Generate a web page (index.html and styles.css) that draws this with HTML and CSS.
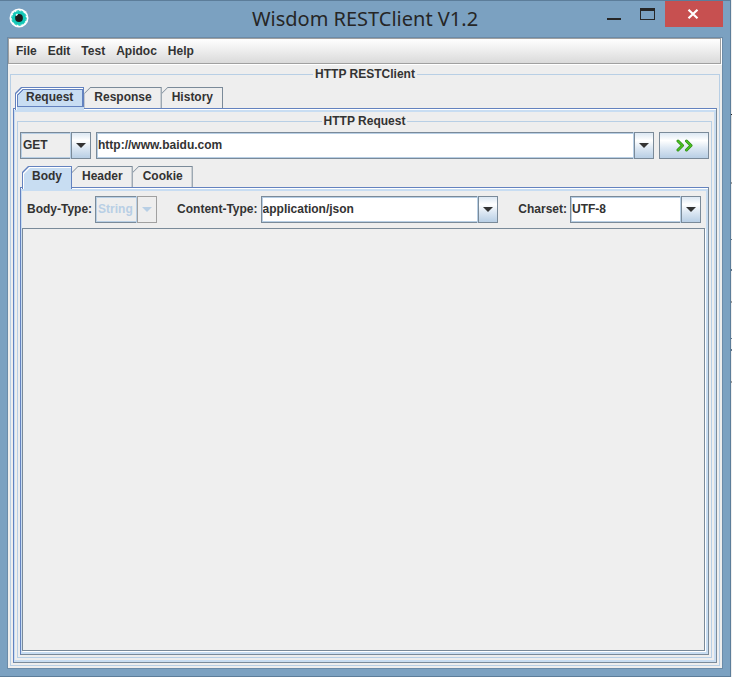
FILE: index.html
```html
<!DOCTYPE html>
<html lang="en">
<head>
    <meta charset="UTF-8">
    <meta name="viewport" content="width=device-width, initial-scale=1.0">
    <title>Wisdom RESTClient V1.2</title>
    <link rel="stylesheet" href="styles.css">
</head>
<body>
    <div class="window">
        <header class="titlebar">
            <svg class="app-icon" viewBox="0 0 20 20" width="20" height="20">
                <circle cx="10" cy="10" r="9.5" fill="#fff"/>
                <circle cx="10" cy="10" r="5.800" fill="#14c8b8" stroke="#14c8b8" stroke-width="2.600"/>
                <circle cx="10" cy="10" r="7.300" fill="none" stroke="#14c8b8" stroke-width="1" stroke-dasharray="3 1.500"/>
                <circle cx="10" cy="10" r="3.9" fill="#1c1c1c"/>
                <path d="M7 7.500l1.500-1.500" stroke="#fff" stroke-width="1.500"/>
            </svg>
            <h1 class="title">Wisdom RESTClient V1.2</h1>
            <div class="window-buttons">
                <button type="button" class="win-btn" aria-label="Minimize">
                    <svg viewBox="0 0 15 12" width="15" height="12"><path d="M0 10h14v2H0z" fill="#262626"/></svg>
                </button>
                <button type="button" class="win-btn" aria-label="Maximize">
                    <svg viewBox="0 0 15 12" width="15" height="12"><path d="M0 0h15v12H0zM1 3v8h13V3z" fill="#262626" fill-rule="evenodd"/></svg>
                </button>
                <button type="button" class="win-btn close" aria-label="Close">
                    <svg viewBox="0 0 12 10" width="12" height="10"><path d="M1.500 .8l9 8.400M10.500 .8l-9 8.400" stroke="#fff" stroke-width="2.200"/></svg>
                </button>
            </div>
        </header>

        <div class="frame">
            <nav class="menubar">
                <button type="button">File</button>
                <button type="button">Edit</button>
                <button type="button">Test</button>
                <button type="button">Apidoc</button>
                <button type="button">Help</button>
            </nav>

            <main class="content">
                <fieldset class="group">
                    <legend>HTTP RESTClient</legend>
                    <div class="tabs" role="tablist">
                        <button type="button" class="tab selected focused" role="tab" aria-selected="true">Request</button>
                        <button type="button" class="tab" role="tab" aria-selected="false">Response</button>
                        <button type="button" class="tab" role="tab" aria-selected="false">History</button>
                    </div>

                    <div class="pane pane-request" role="tabpanel">
                        <fieldset class="group group-request">
                            <legend>HTTP Request</legend>
                            <div class="url-row">
                                <div class="combo method">
                                    <select aria-label="Method">
                                        <option>GET</option>
                                        <option>POST</option>
                                        <option>PUT</option>
                                        <option>DELETE</option>
                                    </select>
                                    <span class="arrow"></span>
                                </div>
                                <div class="combo editable grow">
                                    <input type="text" value="http://www.baidu.com" aria-label="URL">
                                    <button type="button" class="arrow" aria-label="Show history"></button>
                                </div>
                                <button type="button" class="send" aria-label="Send">
                                    <svg viewBox="0 0 17 14" width="17" height="14" fill="none" stroke-linecap="round" stroke-linejoin="round">
                                        <path d="M2 2l4.500 4.500L2 11M10.500 2l4.500 4.500L10.500 11" stroke="#2f8a1a" stroke-width="3"/>
                                        <path d="M2 2l4.500 4.500L2 11M10.500 2l4.500 4.500L10.500 11" stroke="#4cc41f" stroke-width="1.600"/>
                                    </svg>
                                </button>
                            </div>

                            <div class="tabs" role="tablist">
                                <button type="button" class="tab selected" role="tab" aria-selected="true">Body</button>
                                <button type="button" class="tab" role="tab" aria-selected="false">Header</button>
                                <button type="button" class="tab" role="tab" aria-selected="false">Cookie</button>
                            </div>
                            <div class="pane pane-body" role="tabpanel">
                                <div class="body-row">
                                    <label for="bodyType">Body-Type:</label>
                                    <div class="combo body-type disabled">
                                        <select id="bodyType" disabled>
                                            <option>String</option>
                                            <option>File</option>
                                        </select>
                                        <span class="arrow"></span>
                                    </div>
                                    <label for="contentType">Content-Type:</label>
                                    <div class="combo editable grow">
                                        <select id="contentType">
                                            <option>application/json</option>
                                            <option>application/xml</option>
                                            <option>text/plain</option>
                                        </select>
                                        <span class="arrow"></span>
                                    </div>
                                    <label for="charset">Charset:</label>
                                    <div class="combo editable charset">
                                        <select id="charset">
                                            <option>UTF-8</option>
                                            <option>UTF-16</option>
                                        </select>
                                        <span class="arrow"></span>
                                    </div>
                                </div>
                                <textarea class="body-text" aria-label="Body"></textarea>
                            </div>
                        </fieldset>
                    </div>
                </fieldset>
            </main>
        </div>
    </div>
</body>
</html>
```
FILE: styles.css
```css
:root {
    --panel: #eeeeee;
    --text: #333333;
    --line: #7a8a99;
    --line-light: #b8cfe5;
    --line-blue: #6382bf;
    --fill-blue: #c8ddf2;
    --chrome: #7ba1c1;
    --chrome-dark: #5c7d9a;
    --button-fill: linear-gradient(#dde8f3, #fff 30%, #dde8f3 60%, #b8cfe5);
}

* {
    margin: 0;
    padding: 0;
    box-sizing: border-box;
}

body {
    height: 100vh;
    background: linear-gradient(#eee 114px, #222 114px, #222 115px, #ddd 115px, #eee 182px, #999 182px, #999 184px, #eee 184px, #eee 239px, #678 239px, #678 240px, #eee 240px, #eee 269px, #678 269px, #678 271px, #eee 271px, #eee 301px, #999 301px, #999 303px, #eee 303px, #eee 338px, #678 338px, #678 339px, #eee 339px, #eee 349px, #678 349px, #678 351px, #eee 351px, #eee 381px, #999 381px, #999 383px, #eee 383px);
    color: var(--text);
    font: bold 12px/15px "Liberation Sans", Arial, sans-serif;
    overflow: hidden;
}

button,
input,
select,
textarea {
    font: inherit;
    color: inherit;
    border: 0;
    border-radius: 0;
    background: none;
    appearance: none;
    outline: none;
}

.window {
    display: flex;
    flex-direction: column;
    height: 100%;
    margin-right: 1px;
    padding: 0 7px 7px;
    background: var(--chrome);
    border: 1px solid var(--chrome-dark);
    border-left: 0;
}

/* Title bar */
.titlebar {
    display: grid;
    grid-template-columns: 1fr auto 1fr;
    height: 36px;
}

.app-icon {
    margin: 7px 2px;
}

.title {
    font: 20px/36px "Noto Sans", "Open Sans", sans-serif;
    color: #262626;
}

.window-buttons {
    display: flex;
    justify-content: flex-end;
    align-items: flex-start;
}

.win-btn {
    display: flex;
    width: 33px;
    height: 26px;
    padding: 7px 2px 0 0;
    justify-content: center;
}

.win-btn.close {
    width: 58px;
    padding-top: 8px;
    background: #c75050;
}

/* Frame */
.frame {
    flex: 1;
    display: flex;
    flex-direction: column;
    min-height: 0;
    background: var(--panel);
    border: 1px solid #6b8ba8;
}

.menubar {
    display: flex;
    gap: 11px;
    height: 26px;
    margin-right: 1px;
    padding: 0 7px;
    background: linear-gradient(#fff, #dadada);
    border: 1px solid #a0a0a0;
    box-shadow: 1px 1px #fff;
}

.content {
    flex: 1;
    display: flex;
    min-height: 0;
    padding: 3px 2px 2px;
}

.group {
    flex: 1;
    display: flex;
    flex-direction: column;
    min-width: 0;
    padding: 5px 2px 2px;
    border: 1px solid var(--line-light);
}

.group-request {
    padding-top: 3px;
}

.group legend {
    margin: 0 auto;
    padding: 0 2px;
}

/* Tabs */
.tabs {
    display: flex;
    padding-left: 2px;
}

.tab {
    position: relative;
    isolation: isolate;
    height: 21px;
    padding: 0 10px 1px;
    background: var(--line);
    clip-path: polygon(6px 0, 100% 0, 100% 100%, 0 100%, 0 6px);
}

.tab::before,
.tab::after {
    content: "";
    position: absolute;
    z-index: -1;
    inset: 1px 1px 0 0;
    background: var(--panel);
    clip-path: polygon(6px 0, 100% 0, 100% 100%, 0 100%, 0 6px);
}

.tab::after {
    display: none;
}

/* covers the top border of the pane below it */
.tab.selected {
    z-index: 1;
    height: 23px;
    margin-bottom: -2px;
    padding-bottom: 3px;
    background: var(--line-blue);
}

.tab.selected::before {
    inset: 1px 1px 0 1px;
    background: #fff;
}

.tab.selected::after {
    display: block;
    inset: 2px 1px 0 2px;
    background: var(--fill-blue);
}

.tab.focused {
    padding-left: 11px;
    padding-right: 11px;
}

.tab.focused::after {
    inset: 2px 0 0 2px;
    background:
        linear-gradient(135deg, var(--line-blue) 5px, transparent 5px),
        linear-gradient(var(--fill-blue), var(--fill-blue)) 1px 1px / calc(100% - 3px) 16px no-repeat,
        linear-gradient(var(--line-blue), var(--line-blue)) 0 0 / 100% 18px no-repeat,
        var(--fill-blue);
}

.pane {
    flex: 1;
    display: flex;
    flex-direction: column;
    min-height: 0;
    border: 1px solid;
    border-color: var(--line-blue) var(--line) var(--line) var(--line-blue);
    box-shadow:
        inset 0 1px #fff,
        inset 0 3px var(--fill-blue),
        inset 1px 0 var(--fill-blue),
        inset -2px -2px var(--fill-blue);
}

.pane-request {
    padding: 5px 4px 4px 3px;
}

.pane-body {
    padding: 8px 2px 2px 1px;
}

/* Combo boxes */
.combo {
    display: grid;
    grid-template-columns: 1fr 20px;
    height: 27px;
    min-width: 0;
}

.combo select,
.combo input {
    grid-area: 1 / 1 / 2 / 3;
    min-width: 0;
    padding: 0 20px 0 2px;
    border: 1px solid var(--line);
    box-shadow: inset 0 0 0 1px var(--line-light);
}

.combo input {
    grid-column-end: 2;
    padding-right: 1px;
    border-right: 0;
}

.combo.editable select,
.combo.editable input {
    padding-left: 1px;
    background: #fff;
}

.combo .arrow {
    grid-area: 1 / 2;
    display: grid;
    place-items: center;
    border: 1px solid var(--line);
    box-shadow: -1px 0 var(--line-light);
    background: var(--button-fill);
    pointer-events: none;
}

.combo button.arrow {
    pointer-events: auto;
}

.combo .arrow::before {
    content: "";
    border: 5px solid transparent;
    border-top-color: var(--text);
    border-bottom: 0;
}

.combo.disabled select {
    color: var(--line-light);
    opacity: 1;
}

.combo.disabled .arrow {
    background: var(--panel);
    border-color: #a0a0a0;
}

.combo.disabled .arrow::before {
    border-top-color: var(--line-light);
}

.grow {
    flex: 1;
}

.method {
    width: 71px;
}

.body-type {
    width: 62px;
}

.charset {
    width: 131px;
}

/* Request line */
.url-row {
    display: flex;
    gap: 5px;
    margin-bottom: 7px;
}

.send {
    display: grid;
    place-items: center;
    width: 50px;
    height: 27px;
    border: 1px solid var(--line);
    background: var(--button-fill);
}

/* Body tab */
.body-row {
    display: flex;
    align-items: center;
    gap: 3px;
    margin-bottom: 5px;
    padding: 0 5px;
}

.combo + label {
    margin-left: 17px;
}

.body-text {
    flex: 1;
    width: calc(100% - 1px);
    margin-bottom: 1px;
    padding: 2px;
    background: #efefef;
    border: 1px solid var(--line);
    box-shadow: 1px 1px #fff;
    resize: none;
}
```
